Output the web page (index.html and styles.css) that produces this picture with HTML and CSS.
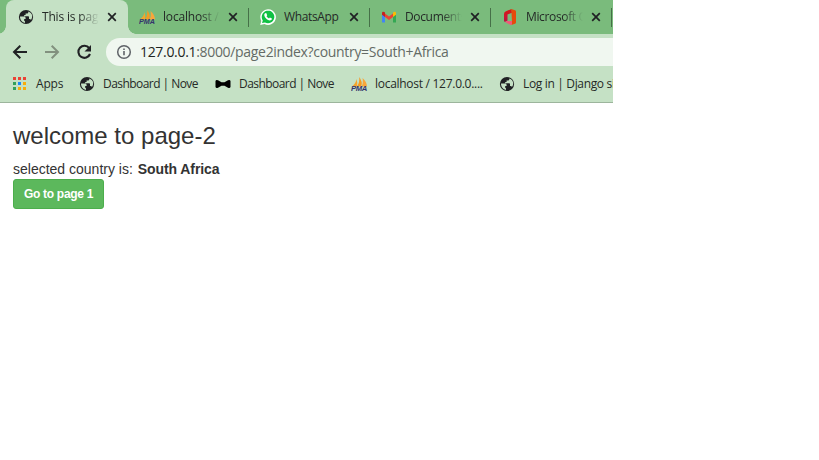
FILE: index.html
```html
<!DOCTYPE html>
<html lang="en">
<head>
<meta charset="utf-8">
<title>This is page 2</title>
<link rel="stylesheet" href="styles.css">
</head>
<body>
<svg class="defs" aria-hidden="true">
  <symbol id="globe" viewBox="0 0 16 16">
    <circle cx="8" cy="8" r="7.1" fill="#202124"/>
    <path d="M2 7.600h4.200Q7.600 7.600 7.600 9v1H6.200v1.500q0 .8.800.8v1.600C4 13.500 2 11 2 7.600zM10.300 2.600v.6q0 1.300-1.300 1.300H7.600v1.400H6.200v1.400h4q.8 0 .8.800v2h.6q1 0 1.400 1C15.200 8 14.500 4 10.300 2.600z" fill="#c5e1c5"/>
  </symbol>
  <symbol id="close" viewBox="0 0 10 10"><path d="M1.200 1.200l7.600 7.600M8.800 1.200L1.200 8.800" stroke="#202124" stroke-width="1.700"/></symbol>
  <symbol id="pma" viewBox="0 0 17 16">
    <path d="M1 10.500Q5 7 5.500 3Q6.800 7 6 10.500z" fill="#f5a52c"/>
    <path d="M6 10.500Q9 6 8.200 1Q12 6 10.200 10.500z" fill="#f79a20"/>
    <path d="M10.500 10.500Q12.500 7 11.500 2Q16 6 16 10.500z" fill="#f9a63b"/>
    <text x="0" y="15" class="pma-label" textLength="16" lengthAdjust="spacingAndGlyphs">PMA</text>
  </symbol>
</svg>
<div class="browser">
  <div class="tabs">
    <div class="tab active"><svg class="icon"><use href="#globe"/></svg><span class="title">This is page</span><svg class="x"><use href="#close"/></svg></div>
    <div class="tab"><svg class="icon pma"><use href="#pma"/></svg><span class="title">localhost / 1</span><svg class="x"><use href="#close"/></svg></div>
    <div class="tab"><svg class="icon" viewBox="0 0 16 16"><path d="M.2 15.900l1.100-4A7.800 7.800 0 1 1 4.500 15z" fill="#fff"/><path d="M2 14.100l.8-2.600A6.300 6.300 0 1 1 5 13.500z" fill="#10c143"/><path d="M5.200 4.200l1-.1 1 2.100-.7 1c.6 1.100 1.400 1.800 2.500 2.300l.9-1 2 .9c.2 1.200-1 2-2.100 2C7 11.200 4.600 8.600 4.300 6.300c-.1-.9.300-1.700.9-2.100z" fill="#fff"/></svg><span class="title whole">WhatsApp</span><svg class="x"><use href="#close"/></svg></div>
    <div class="tab"><svg class="icon" viewBox="0 0 16 16"><path d="M1 4v9.500h3V7z" fill="#4285f4"/><path d="M15 4v9.500h-3V7z" fill="#34a853"/><path d="M4 4.500l4 3 4-3V8l-4 3-4-3z" fill="#ea4335"/><path d="M1 4.200C1 2.700 2.700 2.300 4 3.500V8L1 5.800z" fill="#c5221f"/><path d="M15 4.200c0-1.500-1.700-1.900-3-.7V8l3-2.200z" fill="#fbbc04"/></svg><span class="title tight">Documents</span><svg class="x"><use href="#close"/></svg></div>
    <div class="tab"><svg class="icon" viewBox="0 0 16 16"><defs><linearGradient id="office" x1="0" y1="0" x2="0" y2="1"><stop offset="0" stop-color="#d61b12"/><stop offset=".6" stop-color="#cc1633"/><stop offset="1" stop-color="#b51245"/></linearGradient></defs><path d="M9.500 0L4 2.200Q2 3 2 5v6.500q0 1 1 1.500l2.500-1.400V5.500L10 3.800z" fill="url(#office)"/><path d="M9.300 0l3.700 1.200q1 .3 1 1.500v10.600q0 1.200-1 1.500L9.300 16l.7-3.300z" fill="#e64a0b"/><path d="M3 13l1.800-.9H10v2.800q-.3 1.500-2 .8z" fill="#f05a78"/></svg><span class="title tight">Microsoft Office</span><svg class="x"><use href="#close"/></svg></div>
  </div>
  <div class="toolbar">
    <svg class="nav" viewBox="0 0 16 16"><path d="M15 8H2M8.300 1.700L2 8l6.300 6.300" fill="none" stroke="#202124" stroke-width="2"/></svg>
    <svg class="nav" viewBox="0 0 16 16"><path d="M1 8h13M7.700 1.700L14 8l-6.300 6.300" fill="none" stroke="#82917f" stroke-width="2"/></svg>
    <svg class="nav" viewBox="0 0 16 16"><path d="M13.200 4.200A6 6 0 1 0 14 10" fill="none" stroke="#202124" stroke-width="2.100"/><path d="M15 1v6.500H8.500z" fill="#202124"/></svg>
    <div class="address">
      <svg class="info" viewBox="0 0 16 16"><circle cx="8" cy="8" r="6.300" fill="none" stroke="#5f6368" stroke-width="1.500"/><path d="M8 7v4.300M8 4.400v1.500" stroke="#5f6368" stroke-width="1.600"/></svg>
      <span class="url"><b>127.0.0.1</b>:8000/page2index?country=South+Africa</span>
    </div>
  </div>
  <div class="bookmarks">
    <div class="bookmark apps"><svg class="icon" viewBox="0 0 16 16"><path d="M1 1h3v3H1zM6 1h3v3H6zM11 1h3v3h-3z" fill="#ea4335"/><path d="M1 6h3v3H1zM1 11h3v3H1z" fill="#34a05a"/><path d="M6 6h3v3H6z" fill="#1a88f8"/><path d="M11 6h3v3h-3zM6 11h3v3H6zM11 11h3v3h-3z" fill="#f7ad0b"/></svg><span>Apps</span></div>
    <div class="bookmark dashboard"><svg class="icon"><use href="#globe"/></svg><span>Dashboard | Nove</span></div>
    <div class="bookmark dashboard"><svg class="icon" viewBox="0 0 16 16"><path d="M.5 5Q1 3.500 3 4.300L6.500 6.300h3L13 4.300q2-.8 2.500.7v6q-.5 1.500-2.500.7L9.500 9.700h-3L3 11.700q-2 .8-2.500-.7z"/></svg><span>Dashboard | Nove</span></div>
    <div class="bookmark local"><svg class="icon pma"><use href="#pma"/></svg><span>localhost / 127.0.0....</span></div>
    <div class="bookmark login"><svg class="icon"><use href="#globe"/></svg><span>Log in | Django site</span></div>
  </div>
</div>
<main>
  <h3>welcome to page-2</h3>
  <p>selected country is: <strong>South Africa</strong></p>
  <button type="button">Go to page 1</button>
</main>
</body>
</html>
```
FILE: styles.css
```css
* { box-sizing: border-box; }
body { margin: 0; background: #fff; overflow: hidden; color: #333; font-family: "Liberation Sans", sans-serif; }
svg { display: block; flex: none; }
.defs { position: absolute; width: 0; height: 0; }
.pma-label { font: italic bold 6.5px "Liberation Sans", sans-serif; fill: #34346c; }
.browser { width: 613px; height: 103px; overflow: hidden; background: #c5e1c5; border-bottom: 1px solid #9cb59c; color: #252a27; font: 12px/16px "Open Sans", sans-serif; }
.tabs { display: flex; height: 34px; background: #7abb7c; padding-left: 6px; }
.tab { position: relative; display: flex; flex: none; align-items: center; width: 121px; height: 34px; padding-left: 11px; }
.tab:not(.active)::after { content: ""; position: absolute; right: 0; top: 8px; width: 1px; height: 19px; background: #467048; }
.tab.active { width: 122px; padding-left: 12px; border-radius: 8px 8px 0 0; background: #c5e1c5; }
.tab.active::before, .tab.active::after { content: ""; position: absolute; bottom: 0; width: 8px; height: 8px; }
.tab.active::before { left: -8px; background: radial-gradient(circle at 0 0, transparent 7.5px, #c5e1c5 8px); }
.tab.active::after { right: -8px; background: radial-gradient(circle at 100% 0, transparent 7.5px, #c5e1c5 8px); }
.icon { width: 16px; height: 16px; }
.icon.pma { width: 17px; margin-right: -1px; }
.title { width: 57px; margin: 0 8px; overflow: hidden; white-space: nowrap; letter-spacing: -.18px; -webkit-mask-image: linear-gradient(90deg, #000 65%, transparent); mask-image: linear-gradient(90deg, #000 65%, transparent); }
.title.tight { letter-spacing: -.35px; }
.title.whole { -webkit-mask-image: none; mask-image: none; letter-spacing: -.35px; }
.x { width: 10px; height: 10px; }
.toolbar { display: flex; align-items: center; height: 36px; padding-left: 12px; }
.nav { width: 16px; height: 16px; margin-right: 16px; }
.address { display: flex; align-items: center; flex: 1; height: 28px; margin-left: -2px; padding-left: 10px; background: #f0f7f0; border-radius: 14px 0 0 14px; }
.info { width: 16px; height: 16px; }
.url { margin-left: 8px; font-size: 14px; letter-spacing: -.32px; white-space: nowrap; color: #646b66; }
.url b { font-weight: 400; color: #202421; }
.bookmarks { display: flex; align-items: center; height: 28px; padding-left: 12px; }
.bookmark { display: flex; flex: none; align-items: center; gap: 8px; white-space: nowrap; }
.apps { width: 67px; letter-spacing: -.2px; }
.dashboard { width: 136px; letter-spacing: -.55px; }
.local { width: 148px; letter-spacing: -.28px; }
.login { letter-spacing: -.34px; }
main { padding: 19px 13px; }
h3 { margin: 0 0 10px; font-size: 24px; line-height: 27px; font-weight: 400; }
p { margin: 0; font-size: 14px; line-height: 20px; }
p strong { margin-left: 1px; letter-spacing: -.08px; }
button { display: block; width: 91px; height: 30px; padding: 0 10px; border: 1px solid #4cae4c; border-radius: 3px; background: #5cb85c; color: #fff; font: bold 12px/18px "Liberation Sans", sans-serif; letter-spacing: -.3px; white-space: nowrap; }
```
